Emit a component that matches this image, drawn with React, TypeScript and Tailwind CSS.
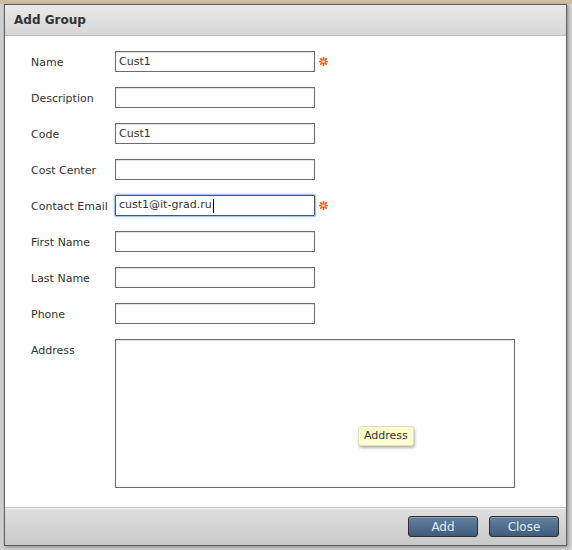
import React from "react";

const fields: { label: string; value?: string; required?: boolean; focused?: boolean }[] = [
  { label: "Name", value: "Cust1", required: true },
  { label: "Description" },
  { label: "Code", value: "Cust1" },
  { label: "Cost Center" },
  { label: "Contact Email", value: "cust1@it-grad.ru", required: true, focused: true },
  { label: "First Name" },
  { label: "Last Name" },
  { label: "Phone" },
];

function Asterisk() {
  return (
    <svg width="9" height="9" viewBox="0 0 8 8" className="ml-[4px]">
      <g stroke="#ff5a00" strokeWidth="1.5" strokeLinecap="round">
        <line x1="4" y1="0.7" x2="4" y2="7.3" />
        <line x1="0.7" y1="4" x2="7.3" y2="4" />
        <line x1="1.6" y1="1.6" x2="6.4" y2="6.4" />
        <line x1="6.4" y1="1.6" x2="1.6" y2="6.4" />
      </g>
      <circle cx="4" cy="4" r="1.1" fill="#fff" />
    </svg>
  );
}

function Field({ label, value, required, focused }: (typeof fields)[number]) {
  return (
    <div className="flex items-center h-[21px]">
      <label className="w-[84px] shrink-0 mt-[4px] text-[11px] text-[#333]">{label}</label>
      {focused ? (
        <div className="w-[200px] h-[21px] border border-[#555] rounded-[1px] bg-white shadow-[0_0_0_1px_#a9c9ee,0_0_3px_1px_#b9d3f0] flex items-center px-[3px] text-[11px] text-[#333]">
          {value}
          <span className="w-px h-[14px] bg-black ml-px" />
        </div>
      ) : (
        <input
          readOnly
          defaultValue={value}
          className="w-[200px] h-[21px] border border-[#6b6b6b] bg-white px-[3px] text-[11px] text-[#333] outline-none shadow-[inset_0_1px_1px_rgba(0,0,0,0.12)]"
        />
      )}
      {required && <Asterisk />}
    </div>
  );
}

function Button({ children }: { children: React.ReactNode }) {
  return (
    <button className="w-[70px] h-[21px] rounded-[3px] border border-[#2e2e2e] bg-gradient-to-b from-[#64839f] to-[#3f5c7b] text-[12px] text-[#dfeaf6] shadow-[inset_0_1px_0_rgba(255,255,255,0.25)]">
      {children}
    </button>
  );
}

export default function App() {
  return (
    <div
      className="w-[572px] h-[550px] bg-[#cfcfcf] relative overflow-hidden"
      style={{ fontFamily: '"DejaVu Sans", Verdana, sans-serif' }}
    >
      <div className="h-[4px] bg-[#cdbf9f]" />
      <div className="ml-[4px] w-[563px] h-[542px] border border-[#5e5e5e] bg-white flex flex-col shadow-[1px_1px_3px_rgba(0,0,0,0.35)]">
        {/* Title bar */}
        <div className="h-[31px] shrink-0 bg-gradient-to-b from-[#e9e9e9] to-[#d7d7d7] border-b border-[#bdbdbd] flex items-center px-[9px]">
          <h2 className="text-[12px] font-bold text-[#333]">Add Group</h2>
        </div>

        {/* Form */}
        <div className="flex-1 pt-[15px] pl-[26px] flex flex-col gap-[15px]">
          {fields.map((f) => (
            <Field key={f.label} {...f} />
          ))}
          <div className="flex">
            <label className="w-[84px] shrink-0 text-[11px] text-[#333] pt-[4px]">Address</label>
            <div className="relative w-[400px] h-[149px] border border-[#6b6b6b] bg-white shadow-[inset_0_1px_1px_rgba(0,0,0,0.12)]">
              <div className="absolute left-[242px] top-[86px] h-[20px] px-[5px] flex items-center rounded-[3px] border border-[#e2e2c0] bg-[#ffffcf] text-[11px] text-[#333] shadow-[1px_2px_3px_rgba(0,0,0,0.3)]">
                Address
              </div>
            </div>
          </div>
        </div>

        {/* Footer */}
        <div className="h-[38px] shrink-0 border-t border-[#c4c4c4] bg-gradient-to-b from-[#dfdfdf] to-[#c9c9c9] shadow-[inset_0_1px_0_#f2f2f2] flex items-center justify-end gap-[11px] pr-[7px]">
          <Button>Add</Button>
          <Button>Close</Button>
        </div>
      </div>
    </div>
  );
}
